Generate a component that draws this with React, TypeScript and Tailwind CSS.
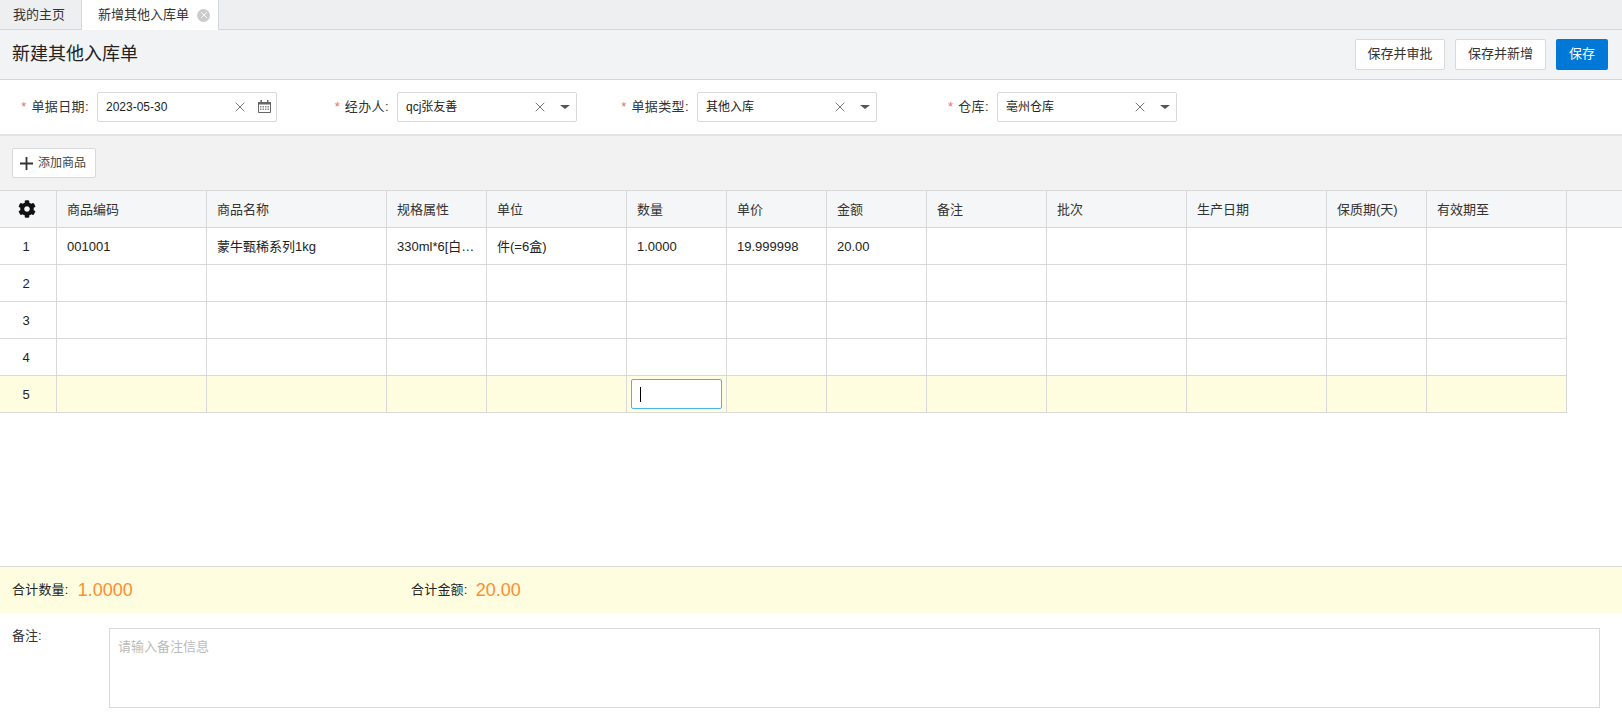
import React from 'react';
import { X } from 'lucide-react';
import { FaCog } from 'react-icons/fa';

const font = "font-['Liberation_Sans','Noto_Sans_CJK_SC',sans-serif]";

const columns = [
  { label: '', width: 'w-[57px]' },
  { label: '商品编码', width: 'w-[150px]' },
  { label: '商品名称', width: 'w-[180px]' },
  { label: '规格属性', width: 'w-[100px]' },
  { label: '单位', width: 'w-[140px]' },
  { label: '数量', width: 'w-[100px]' },
  { label: '单价', width: 'w-[100px]' },
  { label: '金额', width: 'w-[100px]' },
  { label: '备注', width: 'w-[120px]' },
  { label: '批次', width: 'w-[140px]' },
  { label: '生产日期', width: 'w-[140px]' },
  { label: '保质期(天)', width: 'w-[100px]' },
  { label: '有效期至', width: 'w-[140px]' },
];

const firstRow = ['001001', '蒙牛甄稀系列1kg', '330ml*6[白…', '件(=6盒)', '1.0000', '19.999998', '20.00', '', '', '', '', ''];

function CalendarIcon() {
  return (
    <svg width="13" height="13" viewBox="0 0 13 13" className="text-[#666]">
      <path d="M.5 2.5h12v10H.5z" fill="none" stroke="currentColor" />
      <path d="M0 2h13v2.5H0zM2.5 0h1.5v2H2.5zM9 0h1.5v2H9z" fill="currentColor" />
      <path d="M2 6h1.5v1.5H2zM4.5 6H6v1.5H4.5zM7 6h1.5v1.5H7zM9.5 6H11v1.5H9.5zM2 8.5h1.5V10H2zM4.5 8.5H6V10H4.5zM7 8.5h1.5V10H7zM9.5 8.5H11V10H9.5z" fill="currentColor" opacity="0.75" />
    </svg>
  );
}

function Field({ label, value, date }: { label: string; value: string; date?: boolean }) {
  return (
    <div className="flex w-[300px] items-center">
      <label className="flex w-[97px] items-center justify-end pr-2 text-[13px] text-[#333]">
        <span className="mr-[5px] text-[#f56c6c]">*</span>
        <span className="tracking-[0.4px]">{label}:</span>
      </label>
      <div className="flex h-[30px] w-[180px] items-center rounded-[2px] border border-[#d9d9d9] bg-white pl-2 text-[12px] text-[#222]">
        <span className="flex-1">{value}</span>
        <X size={16} strokeWidth={1.2} className="mr-[5px] text-[#555]" />
        <span className="flex w-[23px] justify-center">
          {date ? <CalendarIcon /> : <span className="h-0 w-0 border-x-[5px] border-t-[4px] border-x-transparent border-t-[#555]" />}
        </span>
      </div>
    </div>
  );
}

function Row({ num, active, values }: { num: number; active?: boolean; values?: string[] }) {
  return (
    <div className={`flex h-[37px] w-[1567px] border-b border-[#d9d9d9] text-[13px] text-[#222] ${active ? 'bg-[#fffde0]' : 'bg-white'}`}>
      {columns.map((col, i) => (
        <div key={i} className={`${col.width} flex items-center border-r border-[#d9d9d9] ${i === 0 ? 'justify-center pr-[4px]' : 'px-[10px]'} ${active && i === 5 ? '!px-[4px]' : ''}`}>
          <span className="pt-[2px]">{i === 0 ? num : values ? values[i - 1] : ''}</span>
          {active && i === 5 && (
            <div className="flex h-[30px] w-full items-center rounded-[2px] border border-[#4db3f0] bg-white pl-2">
              <span className="h-[15px] w-px bg-black" />
            </div>
          )}
        </div>
      ))}
    </div>
  );
}

export default function App() {
  return (
    <div className={`flex h-[713px] w-full flex-col overflow-hidden bg-white ${font}`}>
      <div className="flex h-[30px] border-b border-[#d4d6d9] bg-[#eeeff1] text-[13px] text-[#333]">
        <div className="flex w-[82px] items-center border-r border-[#d4d6d9] pl-[13px]">我的主页</div>
        <div className="-mb-px flex w-[137px] items-center gap-2 border-r border-[#d4d6d9] bg-white pl-[16px]">
          新增其他入库单
          <span className="flex h-[13px] w-[13px] items-center justify-center rounded-full bg-[#ccc]">
            <X size={10} strokeWidth={2} className="text-white" />
          </span>
        </div>
      </div>

      <div className="flex h-[50px] items-center justify-between border-b border-[#d4d6d9] bg-[#f2f3f5] pl-3 pr-[14px]">
        <h1 className="text-[18px] font-normal text-[#222]">新建其他入库单</h1>
        <div className="flex gap-[10px] text-[13px] leading-none">
          <button className="h-[31px] w-[90px] rounded-[2px] border border-[#d9d9d9] bg-white pb-[2px] text-[#333]">保存并审批</button>
          <button className="h-[31px] w-[91px] rounded-[2px] border border-[#d9d9d9] bg-white pb-[2px] text-[#333]">保存并新增</button>
          <button className="h-[31px] w-[52px] rounded-[2px] bg-[#0078d7] pb-[2px] text-white">保存</button>
        </div>
      </div>

      <div className="flex h-[56px] items-center border-b-2 border-[#e2e2e2] pb-[3px] pt-[2px]">
        <Field label="单据日期" value="2023-05-30" date />
        <Field label="经办人" value="qcj张友善" />
        <Field label="单据类型" value="其他入库" />
        <Field label="仓库" value="亳州仓库" />
      </div>

      <div className="flex h-[54px] items-start bg-[#f2f2f2] px-3 pt-3">
        <button className="flex h-[30px] w-[84px] items-center justify-center gap-[5px] rounded-[2px] border border-[#d9d9d9] bg-white pr-[2px] text-[12px] text-[#444]">
          <svg width="13" height="13" viewBox="0 0 13 13" className="text-[#333]">
            <path d="M5.6 0h1.8v5.6H13v1.8H7.4V13H5.6V7.4H0V5.6h5.6z" fill="currentColor" />
          </svg>
          添加商品
        </button>
      </div>

      <div className="flex h-[38px] border-y border-[#d9d9d9] bg-[#f5f6f8] text-[13px] text-[#333]">
        {columns.map((col, i) => (
          <div key={i} className={`${col.width} flex items-center border-r border-[#d9d9d9] ${i === 0 ? 'justify-center pr-[3px]' : 'px-[10px]'}`}>
            {i === 0 ? <FaCog size={18} className="text-[#111]" /> : <span className="pt-[2px]">{col.label}</span>}
          </div>
        ))}
      </div>
      <Row num={1} values={firstRow} />
      <Row num={2} />
      <Row num={3} />
      <Row num={4} />
      <Row num={5} active />

      <div className="flex-1" />

      <div className="flex h-[47px] items-center border-t border-[#d9d9d9] bg-[#fffde0] pl-3 text-[13px] text-[#222]">
        <div className="flex w-[399px] items-center">
          <span className="tracking-[0.2px]">合计数量:</span><span className="ml-[9px] text-[18px] text-[#ff8c2e]">1.0000</span>
        </div>
        <div className="flex items-center">
          <span className="tracking-[0.2px]">合计金额:</span><span className="ml-[8px] text-[18px] text-[#ff8c2e]">20.00</span>
        </div>
      </div>

      <div className="flex h-[100px] pl-3 pr-[22px] pt-[15px] text-[13px] text-[#333]">
        <label className="-mt-[2px] w-[97px]">备注:</label>
        <div className="h-[80px] flex-1 border border-[#d9d9d9] px-2 py-2 text-[#bbb]">请输入备注信息</div>
      </div>
    </div>
  );
}
